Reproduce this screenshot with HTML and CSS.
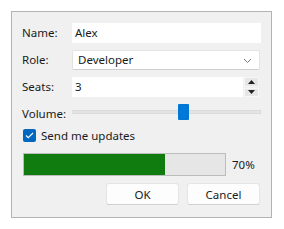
FILE: index.html
```html
<!DOCTYPE html>
<html>
<head>
<meta charset="utf-8">
<title>Settings</title>
<link rel="stylesheet" href="styles.css">
</head>
<body>
<div class="panel">
	<div class="form">
		<label class="lbl">Name:</label>
		<div class="field">Alex</div>

		<label class="lbl">Role:</label>
		<div class="field select">Developer
			<svg class="chev" width="9" height="6" viewBox="0 0 9 6"><path d="M1 1l3.5 3.5L8 1" fill="none" stroke="#777" stroke-width="1"/></svg>
		</div>

		<label class="lbl">Seats:</label>
		<div class="spin">
			<div class="field num">3</div>
			<div class="arrows">
				<span class="arr"><svg width="7" height="4" viewBox="0 0 7 4"><path d="M0 4L3.5 0L7 4z" fill="#222"/></svg></span>
				<span class="arr"><svg width="7" height="4" viewBox="0 0 7 4"><path d="M0 0L3.5 4L7 0z" fill="#222"/></svg></span>
			</div>
		</div>

		<label class="lbl vol">Volume:</label>
		<div class="slider">
			<div class="track"></div>
			<div class="thumb" style="left:57%"></div>
		</div>
	</div>

	<div class="check">
		<span class="box"><svg width="9" height="7" viewBox="0 0 9 7"><path d="M1 3.5l2.2 2.2L8 1" fill="none" stroke="#fff" stroke-width="1.1"/></svg></span>
		Send me updates
	</div>

	<div class="progress">
		<div class="bar"><div class="fill" style="width:70%"></div></div>
		<span class="pct">70%</span>
	</div>

	<div class="buttons">
		<button class="btn">OK</button>
		<button class="btn">Cancel</button>
	</div>
</div>
</body>
</html>
```

FILE: styles.css
```css
* {padding:0; margin:0; box-sizing:border-box;}
body {background:#fff; font-family:"Segoe UI", "Noto Sans", "Open Sans", sans-serif; font-size:11.5px; color:#1a1a1a;}

.panel {width:261px; height:207px; margin:11px 0 0 11px; border:1px solid #b4b4b4; background:#f0f0f0; padding:11px 10px 0 10px;}

.form {display:grid; grid-template-columns:50px 1fr; grid-template-rows:20px 20px 20px 16px; row-gap:7px; align-items:center;}
.lbl {line-height:20px;}
.field {height:20px; line-height:20px; background:#fff; padding-left:3px;}
.select {position:relative; padding-left:5px; border:1px solid #e2e2e2; border-bottom-color:#cfcfcf; line-height:18px; border-radius:2px; margin-right:1px;}
.chev {position:absolute; right:7px; top:7px;}

.spin {display:flex; height:20px;}
.num {flex:1;}
.arrows {width:15px; margin-left:1px; display:flex; flex-direction:column; gap:1px; margin-right:2px;}
.arr {flex:1; background:#e6e6e6; display:flex; align-items:center; justify-content:center; border:1px solid #f7f7f7;}

.vol {line-height:16px; position:relative; top:2px;}
.slider {position:relative; height:16px;}
.track {position:absolute; left:0; right:0; top:6px; height:4px; background:#e4e4e4; border:1px solid #dadada;}
.thumb {position:absolute; top:0; width:11px; height:16px; background:#0078d7; border-radius:1px; margin-left:-2px;}

.check {display:flex; align-items:center; gap:5px; margin-top:8px; margin-left:1px; height:15px;}
.box {width:13px; height:13px; background:#0067c0; border-radius:2px; display:flex; align-items:center; justify-content:center;}

.progress {display:flex; align-items:center; margin-top:10px; margin-left:1px;}
.bar {width:203px; height:23px; background:#e6e6e6; border:1px solid #bcbcbc;}
.fill {height:100%; background:#107c10;}
.pct {margin-left:6px;}

.buttons {display:flex; justify-content:flex-end; gap:8px; margin-top:7px; margin-right:1px;}
.btn {width:73px; height:22px; background:#fdfdfd; border:1px solid #e5e5e5; border-bottom-color:#d0d0d0; border-radius:3px; font:inherit; color:#1a1a1a;}
```
